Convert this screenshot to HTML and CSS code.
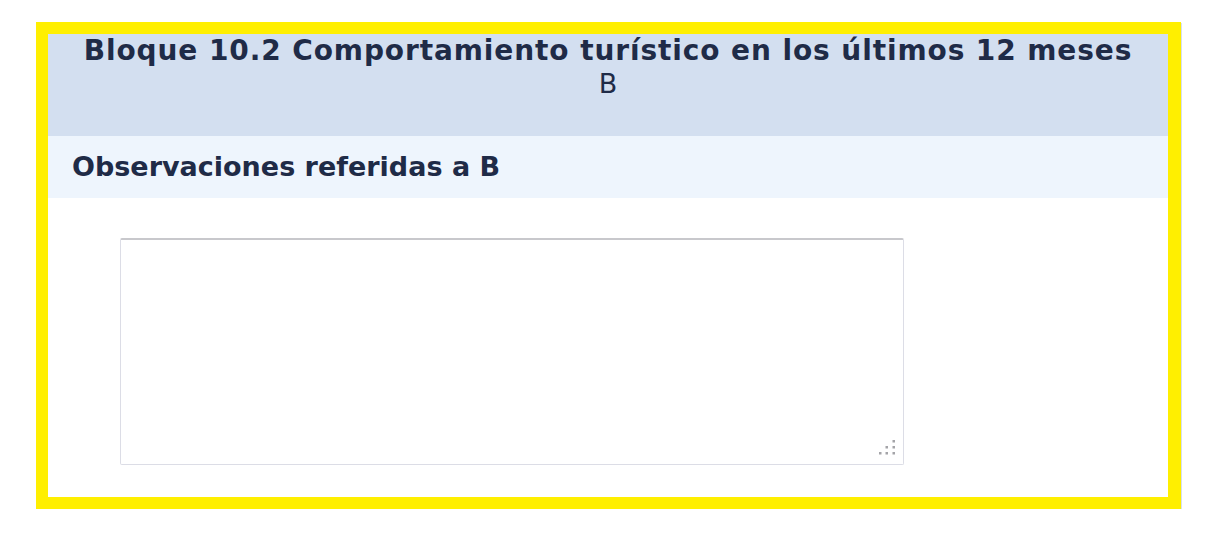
FILE: index.html
```html
<!DOCTYPE html>
<html lang="es">
<head>
<meta charset="utf-8">
<title>Bloque 10.2</title>
<link rel="stylesheet" href="styles.css">
</head>
<body>
<div class="page">
  <section class="block">
    <header class="block-head">
      <h1 class="block-title">Bloque 10.2 Comportamiento turístico en los últimos 12 meses</h1>
      <div class="block-sub">B</div>
    </header>
    <h2 class="section-title">Observaciones referidas a B</h2>
    <div class="field">
      <div class="obs-wrap">
        <textarea class="obs"></textarea>
        <svg class="grip" width="17" height="17" viewBox="0 0 17 17" aria-hidden="true">
          <g fill="#a4a4a8">
            <rect x="13.5" y="0" width="2.5" height="2.5"/>
            <rect x="6.5" y="6" width="2.5" height="2.5"/>
            <rect x="13.5" y="6" width="2.5" height="2.5"/>
            <rect x="0" y="12" width="2.5" height="2.5"/>
            <rect x="6.5" y="12" width="2.5" height="2.5"/>
            <rect x="13.5" y="12" width="2.5" height="2.5"/>
          </g>
        </svg>
      </div>
    </div>
  </section>
</div>
</body>
</html>
```
FILE: styles.css
```css
* { box-sizing: border-box; }
html, body { margin: 0; padding: 0; background: #fff; }
body { font-family: "DejaVu Sans", Verdana, sans-serif; color: #1f2b47; }
.page { padding: 22px 0 0 36px; }
.block {
  width: 1145px;
  border: 12px solid #ffef00;
  border-right-width: 13px;
  box-shadow: 1px 1px 0 #d6e0ee;
  background: #fff;
}
.block-head {
  background: #d3dff0;
  height: 102px;
  padding-top: 3px;
  text-align: center;
}
.block-title {
  margin: 0;
  font-size: 28px;
  font-weight: bold;
  letter-spacing: 0.9px;
  line-height: 28px;
}
.block-sub {
  margin-top: 5px;
  font-size: 27px;
  line-height: 28px;
}
.section-title {
  margin: 0;
  background: #eef5fd;
  height: 62px;
  padding: 0 24px;
  font-size: 27px;
  font-weight: bold;
  line-height: 62px;
}
.field { padding: 40px 72px 32px; }
.obs-wrap { position: relative; width: 784px; }
.obs {
  display: block;
  width: 784px;
  height: 227px;
  margin: 0;
  border: 1px solid #dcdde6;
  border-top: 2px solid #c8c8cc;
  border-radius: 2px;
  background: #fff;
  resize: none;
}
.grip { position: absolute; right: 8px; bottom: 8px; }
```
